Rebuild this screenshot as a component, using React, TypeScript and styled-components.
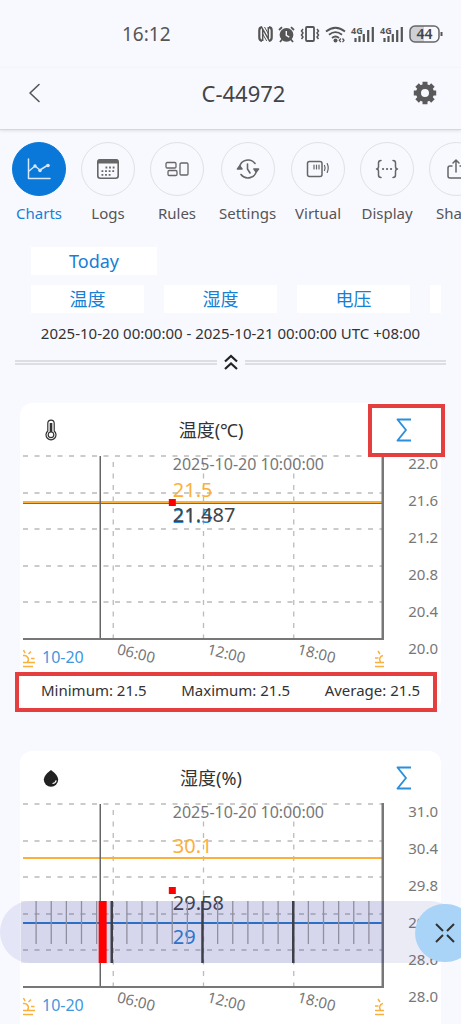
import React from "react";
import styled, { createGlobalStyle, css } from "styled-components";

const GlobalStyle = createGlobalStyle`
  *, *::before, *::after { box-sizing: border-box; }
  html, body { margin: 0; padding: 0; }
  body {
    background: #f8f9ff;
    color: #333;
    font-family: "Noto Sans", "Noto Sans CJK SC", sans-serif;
    font-size: 15px;
  }
  button {
    border: 0;
    padding: 0;
    background: none;
    color: inherit;
    font: inherit;
    cursor: pointer;
  }
  svg { display: block; }
`;

const BLUE = "#1580d4";
const ORANGE = "#fbb03b";
const GRAY = "#777";

const Screen = styled.div`
  position: relative;
  display: flex;
  flex-direction: column;
  height: 100vh;
  overflow: hidden;
`;

const StatusBar = styled.div`
  display: flex;
  align-items: center;
  justify-content: space-between;
  flex: none;
  height: 68px;
  padding: 0 18px 0 122px;
  color: #555;
`;

const Clock = styled.time`
  font-size: 19px;
  line-height: 24px;
`;

const StatusIcons = styled.div`
  display: flex;
  align-items: center;
  gap: 5px;
`;

const Header = styled.header`
  display: flex;
  align-items: center;
  flex: none;
  height: 62px;
  padding: 0 24px 12px;
  border-bottom: 1px solid #d6d7dd;
  box-shadow: 0 1px 3px rgba(0, 0, 0, 0.1);
`;

const HeaderButton = styled.button<{ $width: number }>`
  display: flex;
  width: ${(p) => p.$width}px;
`;

const Title = styled.h1`
  flex: 1;
  margin: 0;
  color: #444;
  font-size: 22px;
  font-weight: 400;
  line-height: 26px;
  text-align: center;
`;

const Tabs = styled.nav`
  display: flex;
  flex: none;
  gap: 15px;
  padding: 12px 0 0 12px;
  overflow: hidden;
`;

const TabButton = styled.button<{ $active?: boolean }>`
  display: flex;
  flex: none;
  flex-direction: column;
  align-items: center;
  gap: 7px;
  min-width: 54px;
  color: ${(p) => (p.$active ? BLUE : "#555")};
  font-size: 15px;
  line-height: 20px;
`;

const TabCircle = styled.span<{ $active?: boolean }>`
  display: flex;
  align-items: center;
  justify-content: center;
  width: 54px;
  height: 54px;
  border: 1px solid #e0e0e6;
  border-radius: 50%;
  color: #666;
  ${(p) =>
    p.$active &&
    css`
      border-color: #0a78d8;
      background: #0a78d8;
      color: #d5e9fa;
    `}
`;

const Filters = styled.section`
  display: flex;
  flex-direction: column;
  flex: none;
  gap: 10px;
  margin: 24px 20px 0;
  padding-left: 11px;
`;

const FilterRow = styled.div`
  display: flex;
  gap: 20px;
  overflow: hidden;
`;

const Chip = styled.button<{ $width: number }>`
  flex: none;
  width: ${(p) => p.$width}px;
  height: 28px;
  background: #fff;
  color: ${BLUE};
  font-size: 18px;
  line-height: 28px;
`;

const Range = styled.p`
  flex: none;
  margin: 10px 0 0;
  color: #333;
  font-size: 15px;
  line-height: 20px;
  text-align: center;
`;

const Collapse = styled.button`
  display: flex;
  align-items: center;
  flex: none;
  gap: 6px;
  height: 20px;
  margin: 9px 15px 0;
`;

const Rule = styled.span`
  flex: 1;
  height: 5px;
  border: solid #dddee4;
  border-width: 2px 0;
`;

const Cards = styled.main`
  display: flex;
  flex: 1;
  flex-direction: column;
  gap: 40px;
  min-height: 0;
  padding: 31px 20px 0;
  overflow: hidden;
`;

const Card = styled.article`
  flex: none;
  padding-left: 3px;
  border-radius: 12px;
  background: #fff;
`;

const CardHeader = styled.div`
  display: grid;
  grid-template-columns: 36px 1fr 78px;
  height: 51px;
`;

const CardIcon = styled.span`
  display: flex;
  align-items: center;
  justify-content: flex-end;
`;

const CardTitle = styled.h2`
  margin: 0;
  padding-top: 2px;
  color: #333;
  font-size: 18px;
  font-weight: 400;
  line-height: 51px;
  text-align: center;
`;

const SumButton = styled.button`
  position: relative;
  display: flex;
  align-items: center;
  justify-content: center;
  padding-left: 4px;
`;

const Mark = styled.span<{ $inset: string }>`
  position: absolute;
  inset: ${(p) => p.$inset};
  z-index: 2;
  border: 4px solid #e53e3e;
  pointer-events: none;
`;

const ChartArea = styled.div`
  display: flex;
`;

const Plot = styled.svg`
  flex: 1;
  min-width: 0;
  height: 214px;
  overflow: hidden;
`;

const Scale = styled.ol`
  display: flex;
  flex-direction: column;
  justify-content: space-between;
  width: 57px;
  height: 203px;
  margin: 0;
  padding-right: 3px;
  padding-left: 0;
  color: ${GRAY};
  font-size: 15px;
  line-height: 18px;
  list-style: none;
  text-align: right;
`;

const Stats = styled.div`
  position: relative;
  display: flex;
  align-items: center;
  justify-content: space-between;
  height: 43px;
  padding: 0 21px 0 18px;
  color: #333;
  font-size: 15px;
  line-height: 20px;
`;

const Ruler = styled.div`
  position: absolute;
  right: 0;
  bottom: 61px;
  left: 0;
  z-index: 3;
  display: flex;
  height: 62px;
  padding: 0 77px 0 21px;
  border-radius: 31px;
  background: rgba(60, 55, 170, 0.1);
`;

const RulerTrack = styled.svg`
  flex: 1;
  height: 62px;
  min-width: 0;
  background: rgba(50, 45, 160, 0.11);
`;

const ShrinkButton = styled.button`
  position: absolute;
  right: -14px;
  bottom: 62px;
  z-index: 4;
  display: flex;
  align-items: center;
  justify-content: center;
  width: 60px;
  height: 58px;
  border-radius: 30px;
  background: #a9d4f8;
`;

const Signal = () => (
  <svg width="24" height="17" viewBox="0 0 24 17" fill="none" stroke="#555" overflow="visible">
    <text x="0" y="8" fill="#555" stroke="none" fontSize="9" fontWeight="700">
      4G
    </text>
    <path d="M4.500 16v-4M8.500 16v-6M12.800 16v-8M17.200 16V4M21.800 16V1" strokeWidth="2.200" />
  </svg>
);

const StatusGlyphs = () => (
  <StatusIcons>
    <svg width="15" height="16" viewBox="0 0 15 16" fill="none" stroke="#555">
      <path d="M4 1.200Q1.300 1.500 1.300 4.500v7Q1.300 14.500 4 14.800M11 1.200Q13.700 1.500 13.700 4.500v7Q13.700 14.500 11 14.800" strokeWidth="2.200" />
      <path d="M4.700 15V3l5.600 10V1" strokeWidth="1.500" />
      <path d="M4.700 8l4 7M6.500 1l4 7" strokeWidth="1" />
    </svg>
    <svg width="17" height="17" viewBox="0 0 17 17" fill="none" stroke="#555">
      <circle cx="8.500" cy="8.800" r="6.900" fill="#555" stroke="none" />
      <path d="M1 4l3-2.800M16 4l-3-2.800M4 13.500L2 16M13 13.500l2 2.500" strokeWidth="1.800" />
      <path d="M8.300 5v4.300l3 1.800" stroke="#f8f9ff" strokeWidth="1.400" />
    </svg>
    <svg width="20" height="16" viewBox="0 0 20 16" fill="none" stroke="#555">
      <rect x="6" y="1" width="8" height="14" rx="1" strokeWidth="1.800" />
      <path d="M3 3L1.500 5 3 7 1.500 9 3 11 1.500 13M17 3l1.500 2L17 7l1.500 2L17 11l1.500 2" strokeWidth="1.500" />
    </svg>
    <svg width="21" height="17" viewBox="0 0 21 17" fill="none" stroke="#555" strokeWidth="1.800">
      <path d="M1 5.500Q10.500-2 20 5.500M4 8.700Q10.500 3.500 17 8.700M7 12Q10.500 9 14 12" />
      <circle cx="10.500" cy="14.500" r="2" fill="#555" stroke="none" />
      <path d="M15.800 12.500l-1.500 1.800 1.500 1.800M17.500 12.500l1.500 1.800-1.500 1.800" strokeWidth="1.300" />
    </svg>
    <Signal />
    <Signal />
    <svg width="34" height="18" viewBox="0 0 34 18">
      <path d="M5 1h10v16H5Q1 17 1 12V6Q1 1 5 1z" fill="#cfd0d5" />
      <rect x="1" y="1" width="29" height="16" rx="5" fill="none" stroke="#666" strokeWidth="1.500" />
      <path d="M32.500 7v4" stroke="#555" strokeWidth="2" />
      <text x="15.500" y="14" textAnchor="middle" fill="#444" fontSize="14" fontWeight="600">
        44
      </text>
    </svg>
  </StatusIcons>
);

const line = { fill: "none", stroke: "currentColor", strokeLinecap: "round", strokeLinejoin: "round" } as const;

const TABS: { label: string; active?: boolean; icon: React.ReactNode }[] = [
  {
    label: "Charts",
    active: true,
    icon: (
      <svg width="26" height="24" viewBox="0 0 26 24" {...line} strokeWidth="1.500">
        <path d="M2.500 2v19.500H24" />
        <path d="M3 14l6-5 5 4 8-5" />
        <g fill="currentColor" stroke="none">
          <circle cx="9" cy="9" r="1.700" />
          <circle cx="14" cy="13.500" r="1.800" />
          <circle cx="22" cy="8.500" r="1.800" />
        </g>
      </svg>
    ),
  },
  {
    label: "Logs",
    icon: (
      <svg width="24" height="24" viewBox="0 0 24 24" fill="none" stroke="currentColor">
        <rect x="1.800" y="2.800" width="20.400" height="18.400" rx="2.500" strokeWidth="1.600" />
        <path d="M1.500 6.500V5q0-3 3-3h15q3 0 3 3v1.500z" fill="currentColor" stroke="none" />
        <path d="M9.500 10.500h10M5.500 14.200h14M5.500 17.800h10" strokeWidth="1.800" strokeDasharray="1.800 1.800" />
      </svg>
    ),
  },
  {
    label: "Rules",
    icon: (
      <svg width="24" height="16" viewBox="0 0 24 16" {...line} strokeWidth="1.300">
        <rect x="1" y="1.500" width="10" height="5.500" rx="1.200" />
        <rect x="3" y="9.500" width="9" height="5" rx="1.200" />
        <rect x="15" y="2" width="8" height="12" rx="1.200" />
      </svg>
    ),
  },
  {
    label: "Settings",
    icon: (
      <svg width="24" height="22" viewBox="0 0 24 22" {...line} strokeWidth="1.600">
        <path d="M3.500 9A8.700 8.700 0 0 1 19 5.500M20.500 12.500A8.700 8.700 0 0 1 5 16.500M11.500 6v5l2.500 4" />
        <path d="M1.500 11h4.500l-2.300-3zM18 11h4.500l-2.300 3z" fill="currentColor" />
      </svg>
    ),
  },
  {
    label: "Virtual",
    icon: (
      <svg width="24" height="18" viewBox="0 0 24 18" {...line} strokeWidth="1.500">
        <rect x="1.500" y="1.500" width="14.500" height="15" rx="2" />
        <path d="M8 5v4M10.500 5v4M13 5v4M18.500 5.500q1.200 2.500 0 5M21.200 3.500q2 4.500 0 9" strokeWidth="1.200" />
      </svg>
    ),
  },
  {
    label: "Display",
    icon: (
      <svg width="24" height="20" viewBox="0 0 24 20" {...line} strokeWidth="1.500">
        <path d="M6 1.500Q3.500 1.500 3.500 4v3.500Q3.500 10 1.500 10q2 0 2 2.500V16q0 2.500 2.500 2.500M18 1.500q2.500 0 2.500 2.500v3.500q0 2.500 2 2.500-2 0-2 2.500V16q0 2.500-2.500 2.500" />
        <path d="M8 10h.1M12 10h.1M16 10h.1" strokeWidth="2.200" />
      </svg>
    ),
  },
  {
    label: "Share",
    icon: (
      <svg width="20" height="22" viewBox="0 0 20 22" {...line} strokeWidth="1.500">
        <path d="M6 8H4Q2 8 2 10v8q0 2 2 2h12q2 0 2-2v-8q0-2-2-2h-2M10 14V2M7 5l3-3 3 3" />
      </svg>
    ),
  },
];

const Thermometer = () => (
  <svg width="16" height="22" viewBox="0 0 16 22" fill="none" stroke="#333">
    <path d="M4.800 12V4.300a3.200 3.200 0 0 1 6.400 0V12a5 5 0 1 1-6.400 0z" strokeWidth="1.200" />
    <path d="M8 4v9" strokeWidth="2.600" />
    <circle cx="8" cy="15.800" r="2.800" strokeWidth="1.200" />
  </svg>
);

const Drop = () => (
  <svg width="16" height="18" viewBox="0 0 16 18">
    <path d="M8 1Q15.200 6.300 15.200 10.600A7 7 0 0 1 .8 10.600Q.8 6.300 8 1z" fill="#222" />
    <path d="M9.500 14.500q3-.3 3.700-3.200" fill="none" stroke="#fff" strokeWidth="1.200" />
  </svg>
);

const Sigma = () => (
  <svg width="16" height="24" viewBox="0 0 16 24" fill="none" stroke="#2b8fdc" strokeWidth="1.900" strokeLinejoin="round">
    <path d="M15 1.500H1.500L10 12 1.500 22.500H15" />
  </svg>
);

/* Sun on the horizon; a wider slice shows in the left corner than in the right. */
const SunLeft = () => (
  <g fill="none" stroke={ORANGE} strokeWidth="1.500">
    <path d="M0 208.500h12M0 212.500h10M0 201.500h1.500a4 4 0 0 1 3 6.500M5.500 200l2.500-2.500M2 199l-1.500-3M8 204.500h3.500" />
  </g>
);

const SunRight = () => (
  <g fill="none" stroke={ORANGE} strokeWidth="1.500">
    <path d="M-9 208.500h9M-9 212.500h9M-1 201.500a4 4 0 0 0-2.500 6.500M-6 197l2 3M-9 204h3.500" />
  </g>
);

interface Reading {
  text: string;
  y: number;
  color: string;
}

interface ChartProps {
  title: string;
  icon: React.ReactNode;
  scale: string[];
  high: number;
  low: number;
  point: number;
  readings: Reading[];
  marked?: boolean;
  stats: string[];
}

const ROWS = [2, 39, 75, 112, 148];
const HOURS = [
  { x: "25%", label: "06:00" },
  { x: "50%", label: "12:00" },
  { x: "75%", label: "18:00" },
];

const ChartCard = ({ title, icon, scale, high, low, point, readings, marked, stats }: ChartProps) => (
  <Card>
    <CardHeader>
      <CardIcon>{icon}</CardIcon>
      <CardTitle>{title}</CardTitle>
      <SumButton aria-label="Summary">
        <Sigma />
        {marked && <Mark $inset="1px -4px -1px 5px" />}
      </SumButton>
    </CardHeader>
    <ChartArea>
      <Plot role="img" aria-label={title}>
        {ROWS.map((y) => (
          <line key={y} x1="0" x2="100%" y1={y} y2={y} stroke="#bbb" strokeWidth="1.300" strokeDasharray="5 6.500" />
        ))}
        {HOURS.map((h) => (
          <line key={h.x} x1={h.x} x2={h.x} y1="8" y2="185" stroke="#bbb" strokeWidth="1.300" strokeDasharray="5 6.500" />
        ))}
        <line x1="0" x2="100%" y1={high} y2={high} stroke={ORANGE} strokeWidth="2" />
        <line x1="0" x2="100%" y1={low} y2={low} stroke="#2a7fd0" strokeWidth={high + 2 > low ? 1 : 2} />
        <line x1="21.400%" x2="21.400%" y1="2" y2="185" stroke="#666" strokeWidth="1.500" />
        <svg x="41.500%" overflow="visible">
          <text x="0" y="16" fontSize="16" fill={GRAY}>
            2025-10-20 10:00:00
          </text>
          {readings.map((r) => (
            <text key={r.text + r.y} x="0" y={r.y} fontSize="20" fill={r.color}>
              {r.text}
            </text>
          ))}
          <rect x="-4" y={point - 3} width="7" height="7" fill="#f00" />
        </svg>
        <line x1="0" x2="100%" y1="185" y2="185" stroke={GRAY} strokeWidth="2" />
        <line x1="100%" x2="100%" y1="1" y2="186" stroke={GRAY} strokeWidth="5" />
        <SunLeft />
        <text x="19" y="209" fontSize="16" fill="#3f97de">
          10-20
        </text>
        {HOURS.map((h) => (
          <svg key={h.label} x={h.x} overflow="visible">
            <text transform="translate(3 200) rotate(14)" fontSize="15" fill={GRAY}>
              {h.label}
            </text>
          </svg>
        ))}
        <svg x="100%" overflow="visible">
          <SunRight />
        </svg>
      </Plot>
      <Scale>
        {scale.map((s) => (
          <li key={s}>{s}</li>
        ))}
      </Scale>
    </ChartArea>
    <Stats>
      {stats.map((s) => (
        <span key={s}>{s}</span>
      ))}
      {marked && <Mark $inset="4px 4px -1px -8px" />}
    </Stats>
  </Card>
);

const TICKS = Array.from({ length: 23 }, (_, i) => i + 1);

export default function App() {
  return (
    <>
      <GlobalStyle />
      <Screen>
        <StatusBar>
          <Clock>16:12</Clock>
          <StatusGlyphs />
        </StatusBar>
        <Header>
          <HeaderButton $width={50} aria-label="Back">
            <svg width="20" height="20" viewBox="0 0 20 20" {...line} stroke="#555" strokeWidth="1.600">
              <path d="M15 1.500L6 10l9 8.500" />
            </svg>
          </HeaderButton>
          <Title>C-44972</Title>
          <HeaderButton $width={24} aria-label="Device settings">
            <svg width="24" height="24" viewBox="0 0 24 24">
              <circle cx="12" cy="12" r="6.500" fill="none" stroke="#5a5a5a" strokeWidth="5" />
              <g stroke="#5a5a5a" strokeWidth="5" strokeLinecap="butt">
                {[0, 45, 90, 135].map((a) => (
                  <path key={a} d="M12 .8v4M12 19.200v4" transform={`rotate(${a} 12 12)`} />
                ))}
              </g>
            </svg>
          </HeaderButton>
        </Header>
        <Tabs>
          {TABS.map((t) => (
            <TabButton key={t.label} $active={t.active}>
              <TabCircle $active={t.active}>{t.icon}</TabCircle>
              {t.label}
            </TabButton>
          ))}
        </Tabs>
        <Filters>
          <FilterRow>
            <Chip $width={126}>Today</Chip>
          </FilterRow>
          <FilterRow>
            <Chip $width={113}>温度</Chip>
            <Chip $width={113}>湿度</Chip>
            <Chip $width={113}>电压</Chip>
            <Chip $width={113} aria-label="More" />
          </FilterRow>
        </Filters>
        <Range>2025-10-20 00:00:00 - 2025-10-21 00:00:00 UTC +08:00</Range>
        <Collapse aria-label="Collapse filters">
          <Rule />
          <svg width="16" height="18" viewBox="0 0 16 18" fill="none" stroke="#222" strokeWidth="2.200">
            <path d="M2 8.500L8 3l6 5.500M2 16l6-5.500 6 5.500" />
          </svg>
          <Rule />
        </Collapse>
        <Cards>
          <ChartCard
            title="温度(℃)"
            icon={<Thermometer />}
            scale={["22.0", "21.6", "21.2", "20.8", "20.4", "20.0"]}
            high={48}
            low={49.5}
            point={48}
            readings={[
              { text: "21.5", y: 43, color: ORANGE },
              { text: "21.5", y: 69, color: "#2b86d6" },
              { text: "21.487", y: 68, color: "#444" },
            ]}
            marked
            stats={["Minimum: 21.5", "Maximum: 21.5", "Average: 21.5"]}
          />
          <ChartCard
            title="湿度(%)"
            icon={<Drop />}
            scale={["31.0", "30.4", "29.8", "29.2", "28.6", "28.0"]}
            high={56}
            low={121}
            point={88}
            readings={[
              { text: "30.1", y: 51, color: ORANGE },
              { text: "29.58", y: 108, color: "#444" },
              { text: "29", y: 142, color: "#2b86d6" },
            ]}
            stats={["Minimum: 29", "Maximum: 30.1", "Average: 29.58"]}
          />
        </Cards>
        <Ruler>
          <RulerTrack>
            {TICKS.map((t) => (
              <line
                key={t}
                x1={`${(t / 24) * 100}%`}
                x2={`${(t / 24) * 100}%`}
                y1="0"
                y2={t % 6 ? 43 : 62}
                stroke={t % 6 ? "#8f8f9f" : "#3f3f48"}
                strokeWidth={t % 6 ? 1.3 : 2.5}
              />
            ))}
            <line x1="22.500%" x2="22.500%" y1="0" y2="62" stroke="#f00" strokeWidth="8" />
          </RulerTrack>
        </Ruler>
        <ShrinkButton aria-label="Shrink">
          <svg width="22" height="22" viewBox="0 0 22 22" fill="none" stroke="#333" strokeWidth="2">
            <path d="M2 2l7 7M20 2l-7 7M2 20l7-7M20 20l-7-7" />
          </svg>
        </ShrinkButton>
      </Screen>
    </>
  );
}
